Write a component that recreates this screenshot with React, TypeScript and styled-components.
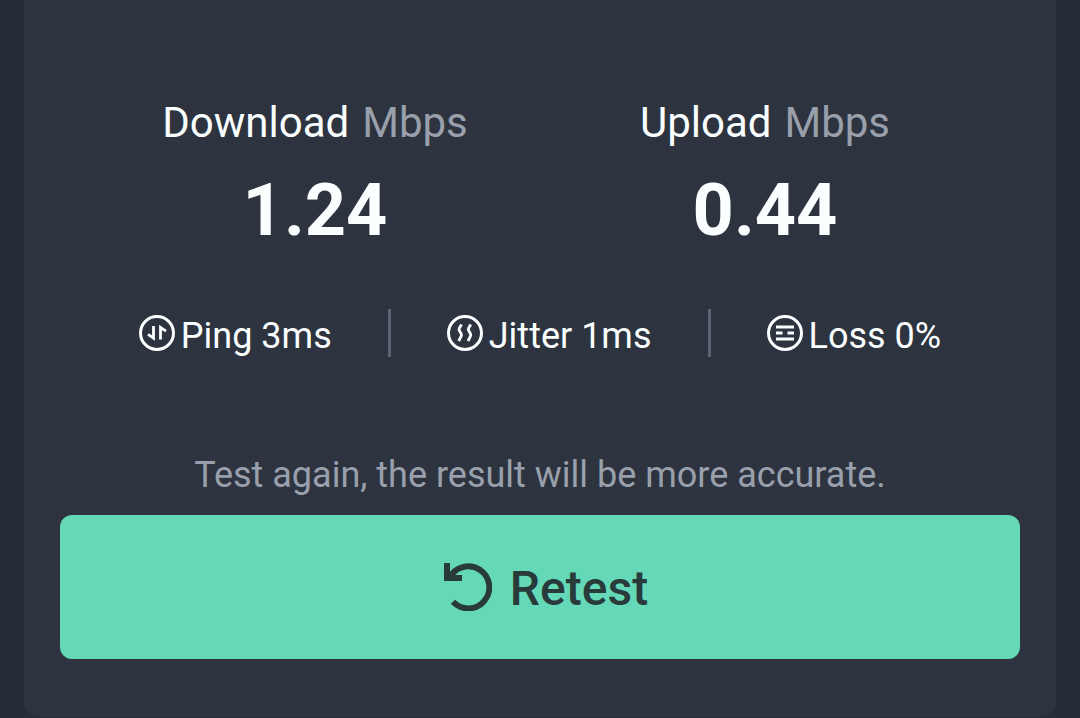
import React from "react";
import styled, { createGlobalStyle } from "styled-components";

const GlobalStyle = createGlobalStyle`
  * { box-sizing: border-box; }
  body {
    margin: 0;
    background: #252d39;
    color: #fafeff;
    font-family: Roboto, "Liberation Sans", sans-serif;
  }
`;

const Page = styled.main`
  padding: 0 24px 1px;
`;

const Card = styled.section`
  display: flex;
  flex-direction: column;
  padding: 98px 36px 58px;
  border-radius: 0 0 16px 16px;
  background: #2d3440;
`;

const Speeds = styled.div`
  display: grid;
  grid-template-columns: 1fr 1fr;
  padding: 0 30px;
`;

const Speed = styled.div`
  display: flex;
  flex-direction: column;
  align-items: center;
  gap: 21px;
`;

const SpeedLabel = styled.div`
  display: flex;
  gap: 13px;
  font-size: 42px;
  line-height: 50px;
`;

const Unit = styled.span`
  color: #99a0ac;
`;

const SpeedValue = styled.div`
  font-size: 72px;
  font-weight: 700;
  line-height: 84px;
`;

const Stats = styled.div`
  display: flex;
  justify-content: center;
  margin-top: 56px;
`;

const Stat = styled.div`
  display: flex;
  align-items: flex-start;
  gap: 6px;
  height: 48px;
  padding: 0 56px;

  & + & {
    border-left: 3px solid #5b6475;
  }
`;

const StatIcon = styled.svg`
  width: 36px;
  height: 48px;
  fill: none;
  stroke: currentColor;
  stroke-width: 3;
`;

const StatText = styled.span`
  font-size: 36px;
  line-height: 54px;
  white-space: nowrap;
`;

const Hint = styled.p`
  margin: 97px 0 19px;
  color: #99a0ac;
  font-size: 36px;
  line-height: 42px;
  text-align: center;
`;

const RetestButton = styled.button`
  display: flex;
  align-items: center;
  justify-content: center;
  gap: 18px;
  height: 144px;
  border: 0;
  border-radius: 12px;
  background: #65d8b7;
  color: #283b3a;
  font-family: inherit;
  font-size: 48px;
  font-weight: 500;
  line-height: 56px;
  cursor: pointer;
`;

const RetestIcon = styled.svg`
  width: 60px;
  height: 48px;
  fill: none;
  stroke: currentColor;
  stroke-width: 6;
`;

const RetestText = styled.span`
  padding-top: 4px;
`;

const PingIcon = () => (
  <StatIcon viewBox="0 -6 36 48" aria-hidden="true">
    <circle cx="18" cy="18" r="16.5" />
    <path d="M14.5 11V23L9 19.3M21.5 24.5V12.5L27 16.2" strokeWidth="2.8" />
  </StatIcon>
);

const JitterIcon = () => (
  <StatIcon viewBox="0 -6 36 48" aria-hidden="true">
    <circle cx="18" cy="18" r="16.5" />
    <path
      d="M14.5 9.5L12.4 13Q11.7 14.5 12.5 15.8L14 18.5Q14.8 20 14.2 21.2L11.7 26M23.8 9.5L21.7 13Q21 14.5 21.8 15.8L23.3 18.5Q24.1 20 23.5 21.2L21 26"
      strokeWidth="2.8"
    />
  </StatIcon>
);

const LossIcon = () => (
  <StatIcon viewBox="0 -6 36 48" aria-hidden="true">
    <circle cx="18" cy="18" r="16.5" />
    <path d="M9 12H27M9 18H15.5M20.5 18H27M9 24H27" strokeWidth="2.8" />
  </StatIcon>
);

const speeds = [
  { label: "Download", value: "1.24" },
  { label: "Upload", value: "0.44" },
];

const stats = [
  { Icon: PingIcon, text: "Ping 3ms" },
  { Icon: JitterIcon, text: "Jitter 1ms" },
  { Icon: LossIcon, text: "Loss 0%" },
];

export default function App() {
  return (
    <>
      <GlobalStyle />
      <Page>
        <Card>
          <Speeds>
            {speeds.map(({ label, value }) => (
              <Speed key={label}>
                <SpeedLabel>
                  <span>{label}</span>
                  <Unit>Mbps</Unit>
                </SpeedLabel>
                <SpeedValue>{value}</SpeedValue>
              </Speed>
            ))}
          </Speeds>
          <Stats>
            {stats.map(({ Icon, text }) => (
              <Stat key={text}>
                <Icon />
                <StatText>{text}</StatText>
              </Stat>
            ))}
          </Stats>
          <Hint>Test again, the result will be more accurate.</Hint>
          <RetestButton type="button">
            <RetestIcon viewBox="0 0 60 48" aria-hidden="true">
              <path d="M21 38.8A21 21 0 1 0 17.5 15" />
              <path d="M15 0V15H30" />
            </RetestIcon>
            <RetestText>Retest</RetestText>
          </RetestButton>
        </Card>
      </Page>
    </>
  );
}
